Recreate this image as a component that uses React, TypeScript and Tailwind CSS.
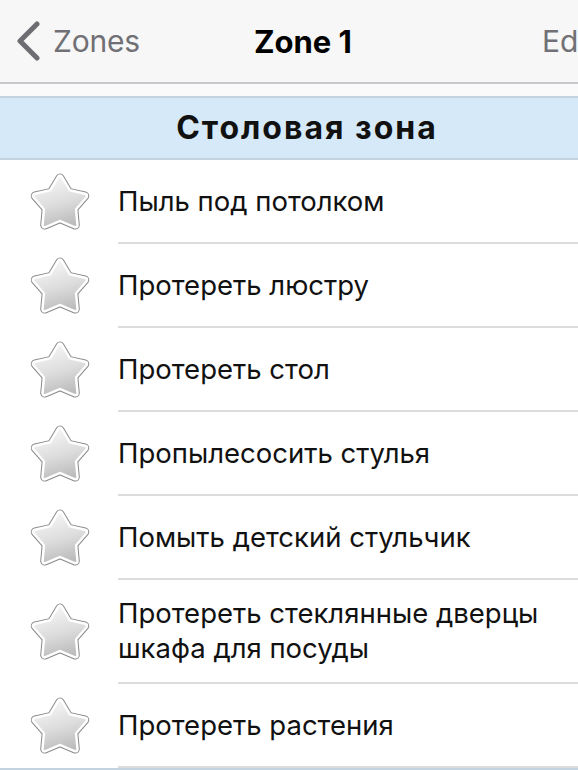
import React from "react";

const items = [
  "Пыль под потолком",
  "Протереть люстру",
  "Протереть стол",
  "Пропылесосить стулья",
  "Помыть детский стульчик",
  "Протереть стеклянные дверцы шкафа для посуды",
  "Протереть растения",
];

const STAR =
  "31,5 39.52,19.27 55.73,22.97 44.79,35.48 46.28,52.03 31,45.5 15.72,52.03 17.21,35.48 6.27,22.97 22.48,19.27";

function Star() {
  return (
    <svg width="62" height="58" viewBox="0 0 62 58" className="shrink-0">
      <defs>
        <linearGradient id="starFill" x1="0.3" y1="0" x2="0.6" y2="1">
          <stop offset="0%" stopColor="#f6f6f6" />
          <stop offset="55%" stopColor="#dcdcdc" />
          <stop offset="100%" stopColor="#bdbdbd" />
        </linearGradient>
      </defs>
      <polygon points={STAR} fill="#8a8a8a" stroke="#8a8a8a" strokeWidth="9" strokeLinejoin="round" />
      <polygon points={STAR} fill="#ffffff" stroke="#ffffff" strokeWidth="7" strokeLinejoin="round" />
      <polygon points={STAR} fill="url(#starFill)" stroke="url(#starFill)" strokeWidth="2" strokeLinejoin="round" />
    </svg>
  );
}

export default function App() {
  return (
    <div
      className="h-[770px] w-[578px] overflow-hidden bg-white"
      style={{ fontFamily: "Inter, 'Noto Sans', sans-serif" }}
    >
      {/* nav bar */}
      <div className="flex h-[84px] items-center border-b-2 border-[#c8c8cc] bg-[#f7f7f7] pl-[15px]">
        <div className="flex items-center gap-[12px]">
          <svg width="26" height="40" viewBox="0 0 26 40">
            <path
              d="M22 3 L5 20 L22 37"
              fill="none"
              stroke="#6d6d72"
              strokeWidth="5"
              strokeLinecap="round"
              strokeLinejoin="round"
            />
          </svg>
          <span className="text-[30px] leading-none tracking-[-0.2px] text-[#707075]">Zones</span>
        </div>
        <span className="ml-[114px] text-[31px] font-bold leading-none text-black">
          Zone 1
        </span>
        <div className="ml-auto w-[36px] overflow-hidden whitespace-nowrap text-[30px] leading-none text-[#707075]">
          Edit
        </div>
      </div>

      <div className="h-[12px] bg-[#fafafa]" />

      {/* section header */}
      <div className="flex h-[64px] items-center justify-center border-y-2 border-[#c3d3e0] bg-[#d6e9f8] pl-[36px]">
        <span className="text-[32px] font-bold leading-none tracking-[2px] text-[#111]">
          Столовая зона
        </span>
      </div>

      <ul>
        {items.map((text, i) => (
          <li key={i} className="flex items-center pl-[29px]">
            <Star />
            <div
              className={
                "ml-[27px] flex flex-1 items-center border-b-2 border-[#dcdcdc] pr-[20px] text-[27.5px] leading-[35px] text-[#111] " +
                (text.length > 30 ? "min-h-[103px] py-[16px]" : "h-[84px]")
              }
            >
              {text}
            </div>
          </li>
        ))}
      </ul>
      <div className="h-[20px] border-t-2 border-[#c3d3e0] bg-[#d6e9f8]" />
    </div>
  );
}
